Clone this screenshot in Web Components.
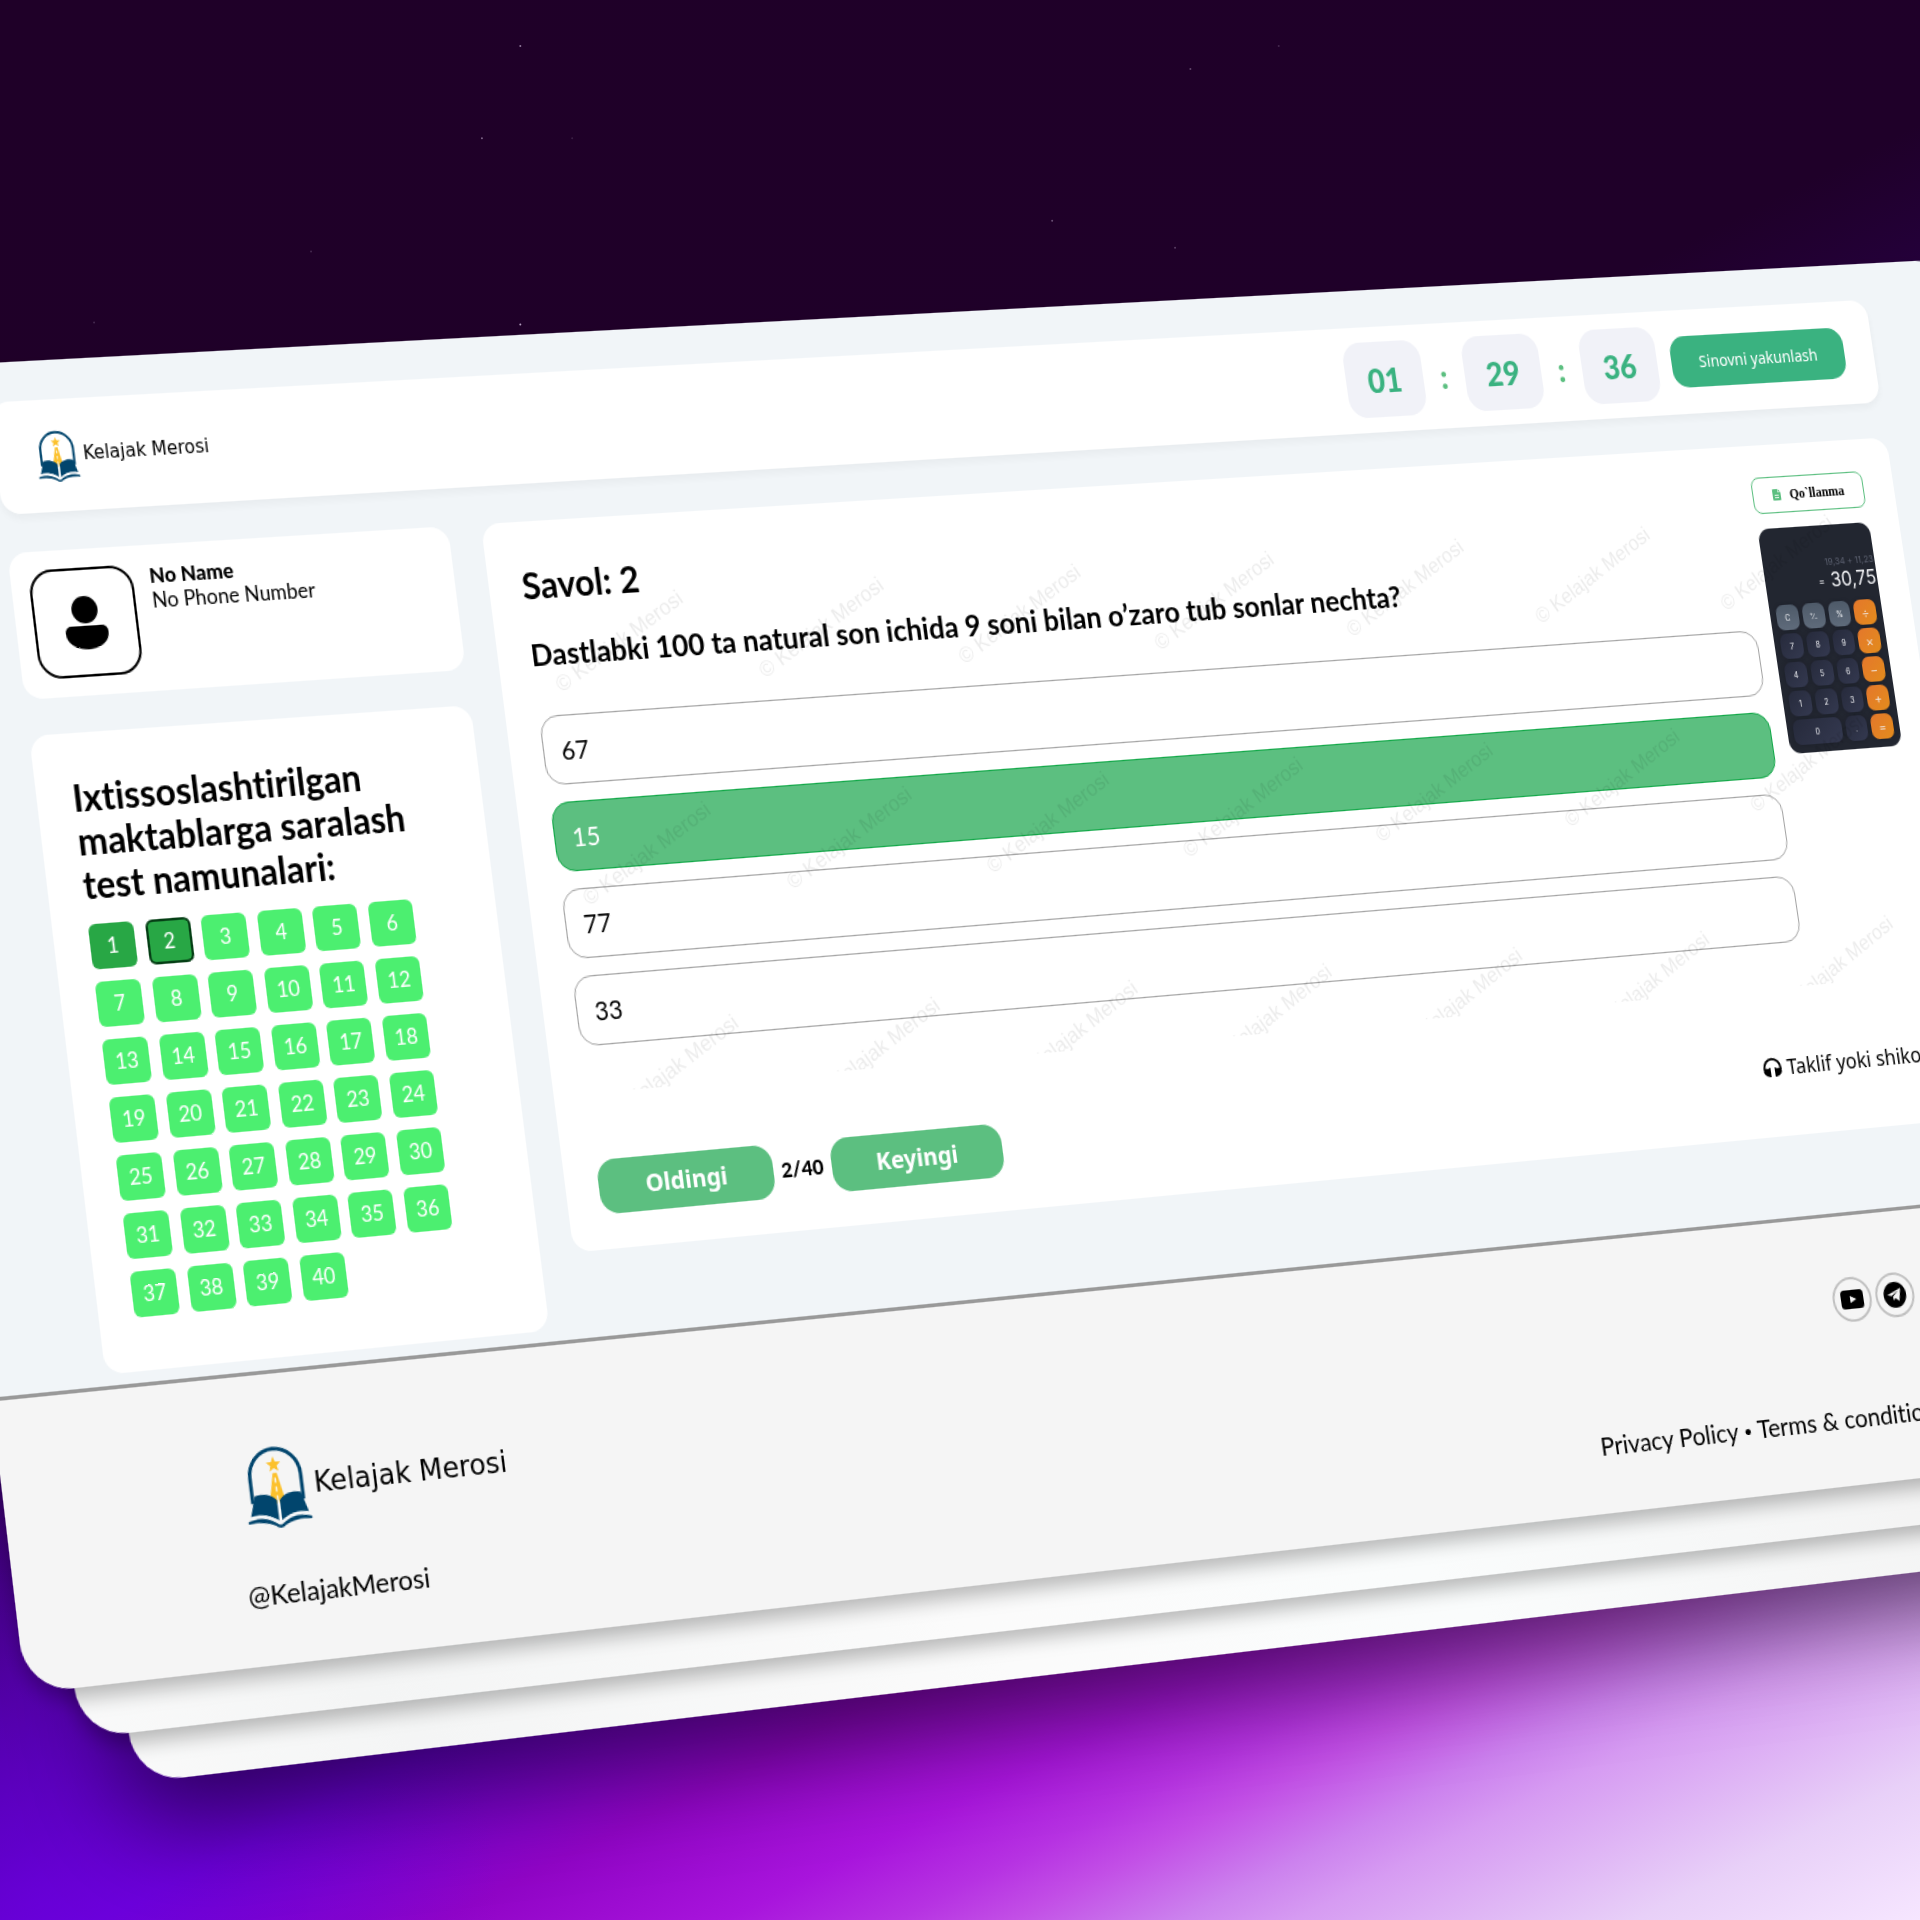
<!DOCTYPE html>
<html lang="uz">
<head>
<meta charset="utf-8">
<title>Kelajak Merosi</title>
<style>
  html, body { margin: 0; height: 100%; }
  body { font-family: Lato, "Noto Sans", sans-serif; font-variant-ligatures: none; color: #000; overflow: hidden; }
</style>
</head>
<body>
<space-scene>
  <exam-sheet>
    <exam-header slot="header"></exam-header>
    <user-card slot="side" name="No Name" phone="No Phone Number"></user-card>
    <question-map slot="side" total="40" done="2" current="2">Ixtissoslashtirilgan maktablarga saralash test namunalari:</question-map>
    <question-card slot="main"></question-card>
    <exam-footer slot="footer"></exam-footer>
  </exam-sheet>
</space-scene>

<script>
const define = (name, html, setup) => customElements.define(name, class extends HTMLElement {
  constructor() {
    super();
    const t = document.createElement('template');
    t.innerHTML = html;
    this.attachShadow({ mode: 'open' }).append(t.content.cloneNode(true));
  }
  connectedCallback() { if (setup) setup(this, this.shadowRoot); }
});

/* Night-sky backdrop; the sheet stack is tilted in perspective on it */
define('space-scene', `
<style>
  :host { display: block; position: relative; min-height: 100vh; overflow: hidden;
    background: radial-gradient(ellipse 24% 22% at 2% 99%, rgba(108,0,226,.6), rgba(104,0,220,0)),
      linear-gradient(153deg, #1f0028 0%, #1f0029 38%, #25003e 44%, #3f007c 56%, #5400b0 64%, #6b00d6 68%, #9004c6 74%, #a814dc 79%, #b632e2 82%, #c24ee6 84%, #cc82ee 87%, #d69bf2 89%, #e8d0f8 95%, #f6e6ff 100%); }
  .stars { position: absolute; inset: 0; width: 100%; height: 100%; }
  .tilt { position: absolute; top: 0; left: 0; width: 100%; transform-origin: 0 0;
    transform: matrix3d(1.192, -0.0435, 0, 0.00005431, 0.1482, 1.23, 0, -0.00002064, 0, 0, 1, 0, -130, 369.3, 0, 1); }
  .under { position: absolute; border-radius: 40px; background: linear-gradient(100deg, #fdfdfd, #f4f5f5 20%, #fbfbfb 45%, #fafcfc 65%, #f3f3f3 90%); }
  .u2 { inset: 39px -40px -39px 40px; box-shadow: 0 8px 16px rgba(0,0,0,.27); }
  .u3 { inset: 78px -80px -78px 80px; box-shadow: 0 26px 80px 6px rgba(0,0,0,.54); }
  .top { position: relative; }
</style>
<svg class="stars" fill="#d9c6e6" aria-hidden="true">
  <circle cx="27.1%" cy="2.4%" r="1" opacity=".6"/><circle cx="25.1%" cy="7.2%" r="1" opacity=".5"/>
  <circle cx="29.8%" cy="7.2%" r="1" opacity=".15"/><circle cx="54.8%" cy="11.5%" r="1" opacity=".4"/>
  <circle cx="61.2%" cy="12.9%" r="1" opacity=".3"/><circle cx="27.1%" cy="16.9%" r="1" opacity=".8"/>
  <circle cx="62%" cy="3.6%" r="1" opacity=".35"/><circle cx="16.2%" cy="13.1%" r="1" opacity=".2"/>
  <circle cx="4.9%" cy="16.8%" r="1" opacity=".2"/><circle cx="66.6%" cy="2.4%" r="1" opacity=".2"/>
</svg>
<div class="tilt"><div class="under u3"></div><div class="under u2"></div><div class="top"><slot></slot></div></div>`);

define('exam-sheet', `
<style>
  :host { display: flex; flex-direction: column; background: #f1f5f8; border-radius: 40px; overflow: hidden; box-shadow: 0 8px 16px rgba(0,0,0,.27); }
  .wrap { padding: 32px 5% 9px; }
  .cols { display: flex; gap: 29px; margin-top: 31px; align-items: flex-start; }
  .side { display: flex; flex-direction: column; gap: 29px; flex: 0 0 378px; }
  .main { flex: 1; min-width: 0; }
</style>
<div class="wrap">
  <slot name="header"></slot>
  <div class="cols"><div class="side"><slot name="side"></slot></div><div class="main"><slot name="main"></slot></div></div>
</div>
<slot name="footer"></slot>`);

define('brand-logo', `
<style>
  :host { display: inline-flex; align-items: center; gap: 4px; font: 15px/1 "DejaVu Sans", sans-serif; --h: 42px; }
  svg { height: var(--h); display: block; }
  span { white-space: nowrap; }
</style>
<svg viewBox="0 0 56 66" aria-hidden="true">
  <path d="M6.300 45V24.500a21.700 21.700 0 0 1 43.400 0V45" fill="none" stroke="#01456d" stroke-width="3"/>
  <path d="M27.500 9l1.700 4.200 4.500.3-3.500 2.900 1.200 4.400-3.900-2.400-3.800 2.400 1.100-4.400-3.500-2.900 4.500-.3z" fill="#fcc12c"/>
  <path d="M26 22h3.500L34 43l-6 4-6.500-4z" fill="#fcc12c"/>
  <path d="M27.700 26v4M27.800 33v4M27.900 40v5" stroke="#f8f4e8" stroke-width="1.500"/>
  <path d="M8.500 39c7-1.800 14-.5 18.500 5V61c-6-6-14-8-23.500-6z" fill="#01456d"/>
  <path d="M48 39c-7-1.800-14-.5-18.500 5V61c6-6 14-8 23.500-6z" fill="#01456d"/>
  <path d="M.8 59c9-3 18-2 26.200 4.500h2C37 57 46 56 55.200 59v2c-9-1.500-17 0-23.700 3.500-1.500 2-5.500 2-7 0C18 61 9 59.500.8 61z" fill="#01456d"/>
  <path d="M2.500 57c9.500-3 18.500-1 25.800 5 7.200-6 16-8 25.500-5" fill="none" stroke="#f6f8fa" stroke-width="1.500"/>
  <path d="M28.200 44v18" stroke="#f6f8fa" stroke-width="1.700"/>
</svg>
<span><slot></slot></span>`);

define('exam-header', `
<style>
  :host { display: flex; align-items: center; justify-content: space-between; min-height: 91px; padding: 0 29px 0 34px;
    background: #fff; border-radius: 16px; box-shadow: 0 4px 6px rgba(0,0,0,.04); }
  .right { display: flex; align-items: center; gap: 14px; }
  .timer { display: flex; align-items: center; font-size: 28px; font-weight: 900; color: #3ab280; }
  .timer b { width: 74px; height: 65px; border-radius: 17px; background: #f1f2f8; display: grid; place-items: center; font-weight: inherit; }
  .timer i { width: 40px; text-align: center; font-style: normal; color: #5cbf80; }
  button { font: 14px/20px "Noto Sans", sans-serif; color: #fff; background: #3ab280; border: 0; border-radius: 15px; height: 45px; width: 172px; padding: 0; }
</style>
<brand-logo>Kelajak Merosi</brand-logo>
<div class="right">
  <div class="timer" role="timer"><b>01</b><i>:</i><b>29</b><i>:</i><b>36</b></div>
  <button type="button">Sinovni yakunlash</button>
</div>`);

define('user-card', `
<style>
  :host { display: flex; gap: 14px; padding: 15px; background: #fff; border-radius: 16px; font-size: 17px; line-height: 20px; }
  .pic { width: 84px; height: 84px; border: 2px solid #000; border-radius: 20px; }
  .pic svg { display: block; width: 100%; height: 100%; }
  strong { display: block; font-weight: 900; }
</style>
<div class="pic"><svg viewBox="0 0 84 84" aria-hidden="true"><circle cx="42" cy="32" r="11"/><path d="M29 45h26a5 5 0 0 1 5 5v1c0 8-9 13-18 13s-18-5-18-13v-1a5 5 0 0 1 5-5z"/></svg></div>
<div><strong></strong><span></span></div>`, (el, root) => {
  root.querySelector('strong').textContent = el.getAttribute('name');
  root.querySelector('span').textContent = el.getAttribute('phone');
});

define('question-map', `
<style>
  :host { display: block; background: #fff; border-radius: 16px; padding: 34px 30px 42px; }
  h2 { margin: 0 0 14px; font-size: 30px; line-height: 35px; font-weight: 700; }
  nav { display: grid; grid-template-columns: repeat(6, 38px); justify-content: space-between; max-width: 276px; row-gap: 10px; }
  button { box-sizing: border-box; width: 38px; height: 36px; border: 0; border-radius: 6px; padding: 0; font: 17px/20px Lato, sans-serif; color: #fff; background: #4cef70; }
  .done { background: #28a745; }
  .current { border: 2px solid #053f15; }
</style>
<h2><slot></slot></h2><nav aria-label="Savollar"></nav>`, (el, root) => {
  const nav = root.querySelector('nav');
  for (let n = 1; n <= +el.getAttribute('total'); n++) {
    const b = document.createElement('button');
    b.type = 'button';
    b.textContent = n;
    if (n <= +el.getAttribute('done')) b.classList.add('done');
    if (n === +el.getAttribute('current')) b.classList.add('current');
    nav.append(b);
  }
});

define('calc-preview', `
<style>
  :host { display: block; box-sizing: border-box; height: 196px; padding: 0 6px 7px; border-radius: 11px; overflow: hidden; background: #222630; font-family: Inter, sans-serif; color: #f2f3f6; }
  .screen { height: 67px; box-sizing: border-box; padding-top: 27px; margin-right: -5px; text-align: right; white-space: nowrap; }
  .screen small { display: block; font-size: 8px; line-height: 11px; color: #5c6170; }
  .screen div { font-size: 17px; line-height: 20px; }
  .screen em { font-style: normal; font-size: 9px; vertical-align: 2px; margin-right: 6px; }
  .keys { display: grid; grid-template-columns: repeat(4, 1fr); grid-auto-rows: 22px; gap: 3px 4px; font-size: 7px; }
  .keys span { display: grid; place-items: center; border-radius: 7px; background: linear-gradient(135deg, #262a3b, #343950); box-shadow: 0 0 3px #1c1f2a; }
  .keys .fn { background: linear-gradient(#4e5a69, #5f6b7b); }
  .keys .op { background: linear-gradient(135deg, #e4772c, #e38c1c); font-size: 12px; font-weight: 300; }
  .keys .zero { grid-column: span 2; }
</style>
<div class="screen"><small>19,34 + 11,23</small><div><em>=</em>30,75</div></div>
<div class="keys">
  <span class="fn">C</span><span class="fn">⁺∕₋</span><span class="fn">%</span><span class="op">÷</span>
  <span>7</span><span>8</span><span>9</span><span class="op">×</span>
  <span>4</span><span>5</span><span>6</span><span class="op">−</span>
  <span>1</span><span>2</span><span>3</span><span class="op">+</span>
  <span class="zero">0</span><span>.</span><span class="op">=</span>
</div>`);

define('water-mark', `
<style>
  :host { display: grid; grid-template-columns: repeat(7, 1fr); grid-auto-rows: 175px; overflow: hidden; pointer-events: none;
    font: 18px/20px "Liberation Sans", sans-serif; color: rgba(0,0,0,.08); }
  span { place-self: center; white-space: nowrap; transform: rotate(-30deg); }
</style>`, (el, root) => {
  for (let i = 0; i < 21; i++) {
    const s = document.createElement('span');
    s.textContent = '© Kelajak Merosi';
    root.append(s);
  }
});

define('question-card', `
<style>
  :host { display: block; position: relative; background: #fff; border-radius: 16px; padding: 28px 30px 28px 29px; }
  .body { display: flex; gap: 16px; }
  .left { flex: 1; min-width: 0; }
  aside { flex: 0 0 111px; display: flex; flex-direction: column; gap: 13px; }
  h2 { margin: 7px 0 24px; font-size: 30px; line-height: 35px; font-weight: 700; }
  fieldset { border: 0; margin: 0; padding: 0; }
  legend { padding: 0; margin-bottom: 36px; font-size: 25px; line-height: 30px; font-weight: 700; }
  .answers { display: flex; flex-direction: column; gap: 14px; }
  label { display: flex; align-items: center; box-sizing: border-box; height: 57px; padding: 0 15px; border: 1px solid #a4a4a4; border-radius: 16px; font-size: 21px; line-height: 24px; }
  label:has(:checked) { background: #5cbf80; border-color: #12a848; color: #fff; }
  input { appearance: none; position: absolute; margin: 0; width: 0; height: 0; }
  .guide { display: flex; align-items: center; justify-content: center; gap: 9px; height: 32px; padding: 0; border: 1px solid #5cbf80; border-radius: 8px; background: #fff; font: bold 12px/16px "Liberation Serif", serif; color: #000; }
  .guide svg { width: 8px; height: 10px; }
  .nav { display: flex; align-items: center; gap: 7px; margin-top: 92px; }
  .nav button { width: 154px; height: 44px; border: 0; border-radius: 16px; padding: 0; background: #5cbf80; color: #fff; font: bold 20px/24px "Noto Sans", sans-serif; }
  .nav b { font-size: 17px; line-height: 20px; font-weight: 900; }
  .nav a { display: flex; align-items: center; gap: 4px; align-self: flex-start; margin-left: auto; padding-right: 2px; font: 18px/26px "Noto Sans", sans-serif; color: #000; text-decoration: none; }
  .nav a svg { width: 20px; height: 18px; }
  water-mark { position: absolute; left: 18px; right: 36px; top: 15px; height: 453px; }
</style>
<div class="body">
  <div class="left">
    <h2>Savol: 2</h2>
    <fieldset>
      <legend>Dastlabki 100 ta natural son ichida 9 soni bilan o’zaro tub sonlar nechta?</legend>
      <div class="answers">
        <label><input type="radio" name="answer">67</label>
        <label><input type="radio" name="answer" checked>15</label>
        <label><input type="radio" name="answer">77</label>
        <label><input type="radio" name="answer">33</label>
      </div>
    </fieldset>
  </div>
  <aside>
    <button type="button" class="guide"><svg viewBox="0 0 8 10" aria-hidden="true"><path d="M1 0h4v3h3v6a1 1 0 0 1-1 1H1a1 1 0 0 1-1-1V1a1 1 0 0 1 1-1zM5.500 0L8 2.500H5.500z" fill="#5cbf80"/><path d="M2 5.500h4M2 7.500h4" stroke="#fff" stroke-width=".8"/></svg>Qo\`llanma</button>
    <calc-preview></calc-preview>
  </aside>
</div>
<div class="nav">
  <button type="button">Oldingi</button><b>2/40</b><button type="button">Keyingi</button>
  <a href="#"><svg viewBox="0 0 20 18" aria-hidden="true"><path d="M2.200 11V9.500a7.800 7.800 0 0 1 15.600 0V11" fill="none" stroke="#000" stroke-width="2"/><path d="M8 9v8C4.500 17 1.200 14.800 1.200 12 1.200 10 3.500 9 8 9zM12 9v8c3.500 0 6.800-2.200 6.800-5 0-2-2.300-3-6.800-3z"/><path d="M3 9.500l3.500-.8V10zM17 9.500l-3.500-.8V10z" fill="#fff"/></svg>Taklif yoki shikoyat</a>
</div>
<water-mark aria-hidden="true"></water-mark>`);

define('exam-footer', `
<style>
  :host { display: flex; flex-direction: column; gap: 34px; padding: 52px 181px 42px 192px; border-top: 3px solid #999; background: #f5f5f5; font-size: 22px; line-height: 26px; }
  .row { display: flex; align-items: center; justify-content: space-between; }
  .brand { min-height: 72px; }
  brand-logo { --h: 65px; font-size: 23px; padding-left: 7px; }
  .social { display: flex; gap: 4px; padding-right: 14px; align-self: flex-start; }
  .social a { width: 34px; height: 34px; border: 2px solid #c0c0c0; border-radius: 50%; display: grid; place-items: center; }
  .social svg { width: 24px; height: 24px; display: block; }
  .links a { color: inherit; text-decoration: none; }
  .links i { font-style: normal; font-size: 14px; vertical-align: 2px; }
</style>
<div class="row brand">
  <brand-logo>Kelajak Merosi</brand-logo>
  <div class="social">
    <a href="#" aria-label="YouTube"><svg viewBox="0 0 24 24"><rect x="1" y="4" width="22" height="16" rx="3.500"/><path d="M10 9l6 3-6 3z" fill="#f5f5f5"/></svg></a>
    <a href="#" aria-label="Telegram"><svg viewBox="0 0 24 24"><circle cx="12" cy="12" r="11"/><path d="M4.500 11.800L18 6.500l-2.300 11-3.600-2.700-1.800 1.900-.4-3.300 5.600-5-6.800 4.300z" fill="#f5f5f5"/></svg></a>
  </div>
</div>
<div class="row">
  <span>@KelajakMerosi</span>
  <span class="links"><a href="#">Privacy Policy</a> <i>•</i> <a href="#">Terms &amp; conditions</a></span>
</div>`);
</script>
</body>
</html>
